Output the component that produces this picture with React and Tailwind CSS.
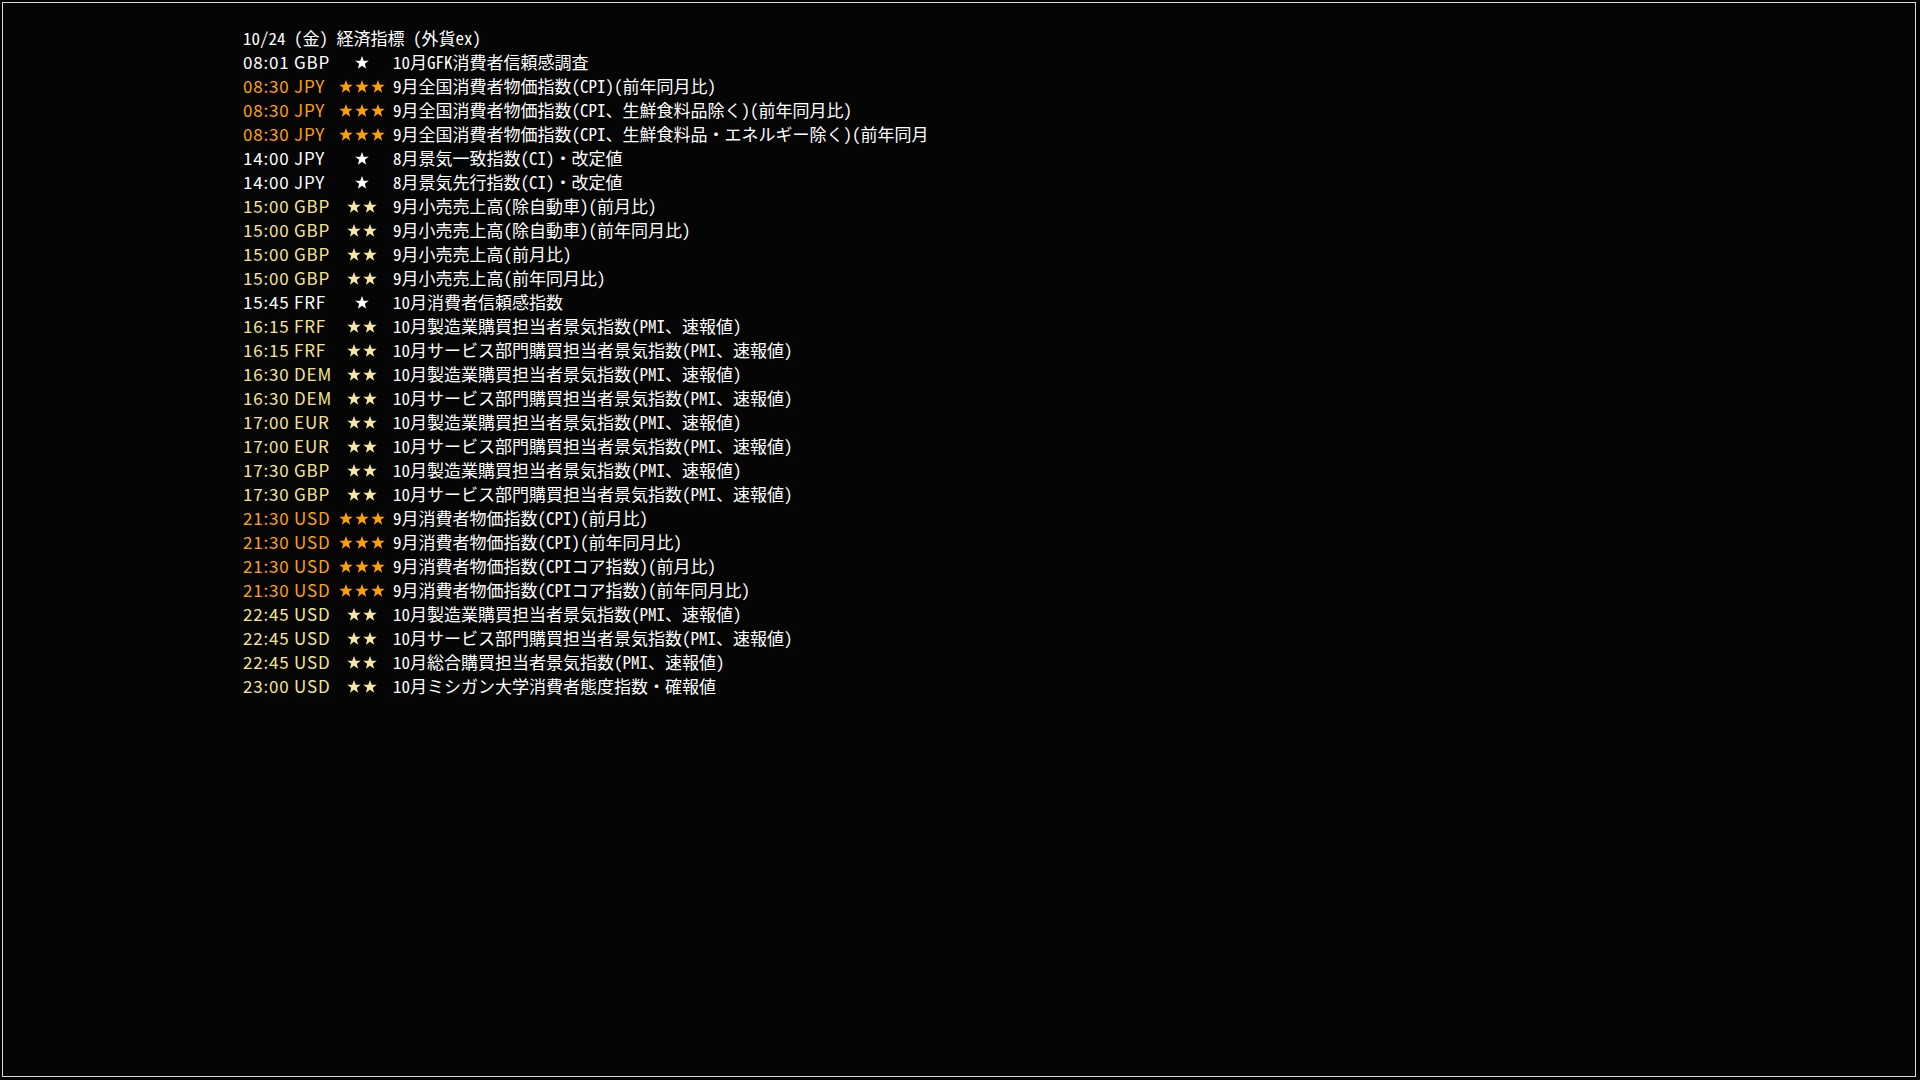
const rows = [
  ['08:01 GBP', 1, '10月GFK消費者信頼感調査'],
  ['08:30 JPY', 3, '9月全国消費者物価指数(CPI)(前年同月比)'],
  ['08:30 JPY', 3, '9月全国消費者物価指数(CPI、生鮮食料品除く)(前年同月比)'],
  ['08:30 JPY', 3, '9月全国消費者物価指数(CPI、生鮮食料品・エネルギー除く)(前年同月比)'],
  ['14:00 JPY', 1, '8月景気一致指数(CI)・改定値'],
  ['14:00 JPY', 1, '8月景気先行指数(CI)・改定値'],
  ['15:00 GBP', 2, '9月小売売上高(除自動車)(前月比)'],
  ['15:00 GBP', 2, '9月小売売上高(除自動車)(前年同月比)'],
  ['15:00 GBP', 2, '9月小売売上高(前月比)'],
  ['15:00 GBP', 2, '9月小売売上高(前年同月比)'],
  ['15:45 FRF', 1, '10月消費者信頼感指数'],
  ['16:15 FRF', 2, '10月製造業購買担当者景気指数(PMI、速報値)'],
  ['16:15 FRF', 2, '10月サービス部門購買担当者景気指数(PMI、速報値)'],
  ['16:30 DEM', 2, '10月製造業購買担当者景気指数(PMI、速報値)'],
  ['16:30 DEM', 2, '10月サービス部門購買担当者景気指数(PMI、速報値)'],
  ['17:00 EUR', 2, '10月製造業購買担当者景気指数(PMI、速報値)'],
  ['17:00 EUR', 2, '10月サービス部門購買担当者景気指数(PMI、速報値)'],
  ['17:30 GBP', 2, '10月製造業購買担当者景気指数(PMI、速報値)'],
  ['17:30 GBP', 2, '10月サービス部門購買担当者景気指数(PMI、速報値)'],
  ['21:30 USD', 3, '9月消費者物価指数(CPI)(前月比)'],
  ['21:30 USD', 3, '9月消費者物価指数(CPI)(前年同月比)'],
  ['21:30 USD', 3, '9月消費者物価指数(CPIコア指数)(前月比)'],
  ['21:30 USD', 3, '9月消費者物価指数(CPIコア指数)(前年同月比)'],
  ['22:45 USD', 2, '10月製造業購買担当者景気指数(PMI、速報値)'],
  ['22:45 USD', 2, '10月サービス部門購買担当者景気指数(PMI、速報値)'],
  ['22:45 USD', 2, '10月総合購買担当者景気指数(PMI、速報値)'],
  ['23:00 USD', 2, '10月ミシガン大学消費者態度指数・確報値'],
];

const timeColor = {
  1: 'text-white',
  2: 'text-[#f6e58a]',
  3: 'text-[#ffa200]',
};

const starFill = {
  1: '#ffffff',
  2: '#f6e8a2',
  3: '#ffa200',
};

function Star({ fill }) {
  return (
    <svg width="14" height="13" viewBox="0 0 13 12" className="shrink-0">
      <polygon
        points="6.5,0 8.1,4.3 12.8,4.4 9.1,7.2 10.4,11.8 6.5,9.1 2.6,11.8 3.9,7.2 0.2,4.4 4.9,4.3"
        fill={fill}
      />
    </svg>
  );
}

export default function App() {
  return (
    <div className="w-[1920px] h-[1080px] bg-black p-[2px]">
      <div
        className="w-[1914px] h-[1075px] border border-[#d8d8d8] bg-[#050505] pl-[240px] pt-[23px] text-white text-[17px] leading-[24px] [font-feature-settings:'hwid']"
        style={{ fontFamily: '"Noto Sans CJK JP", "Noto Sans", sans-serif' }}
      >
        {/* Header */}
        <div className="h-[24px] whitespace-nowrap">10/24 (金) 経済指標 (外貨ex)</div>

        {/* Events */}
        {rows.map(([time, level, title], i) => (
          <div key={i} className="flex items-center h-[24px] whitespace-nowrap">
            <span className={`w-[95px] shrink-0 tracking-[0.8px] [font-feature-settings:normal] ${timeColor[level]}`}>{time}</span>
            <span className="w-[48px] shrink-0 flex items-center justify-center gap-[2px]">
              {Array.from({ length: level }).map((_, j) => (
                <Star key={j} fill={starFill[level]} />
              ))}
            </span>
            <span className="ml-[7px] w-[536px] overflow-hidden">{title}</span>
          </div>
        ))}
      </div>
    </div>
  );
}
